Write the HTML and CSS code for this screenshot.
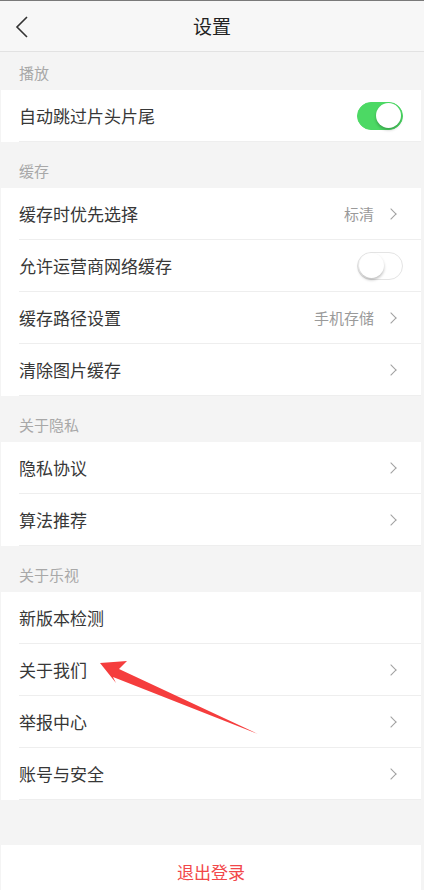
FILE: index.html
```html
<!DOCTYPE html>
<html lang="zh-CN">
<head>
    <meta charset="UTF-8">
    <meta name="viewport" content="width=device-width, initial-scale=1.0">
    <title>设置</title>
    <link rel="stylesheet" href="styles.css">
</head>
<body>
    <div class="page">
        <header class="nav">
            <span class="nav-back">
                <svg width="14" height="22" viewBox="0 0 14 22"><polyline points="12,1 2,11 12,21" fill="none" stroke="#333" stroke-width="1.6"/></svg>
            </span>
            <h1>设置</h1>
            <span></span>
        </header>

        <div class="section-title first">播放</div>
        <div class="group">
            <div class="row">
                <div class="row-body">
                    <span class="label">自动跳过片头片尾</span>
                    <span class="switch on"><i></i></span>
                </div>
            </div>
        </div>

        <div class="section-title">缓存</div>
        <div class="group">
            <div class="row">
                <div class="row-body">
                    <span class="label">缓存时优先选择</span>
                    <span class="value">标清</span>
                    <span class="chevron"></span>
                </div>
            </div>
            <div class="row">
                <div class="row-body">
                    <span class="label">允许运营商网络缓存</span>
                    <span class="switch"><i></i></span>
                </div>
            </div>
            <div class="row">
                <div class="row-body">
                    <span class="label">缓存路径设置</span>
                    <span class="value">手机存储</span>
                    <span class="chevron"></span>
                </div>
            </div>
            <div class="row">
                <div class="row-body">
                    <span class="label">清除图片缓存</span>
                    <span class="chevron"></span>
                </div>
            </div>
        </div>

        <div class="section-title">关于隐私</div>
        <div class="group">
            <div class="row">
                <div class="row-body">
                    <span class="label">隐私协议</span>
                    <span class="chevron"></span>
                </div>
            </div>
            <div class="row">
                <div class="row-body">
                    <span class="label">算法推荐</span>
                    <span class="chevron"></span>
                </div>
            </div>
        </div>

        <div class="section-title">关于乐视</div>
        <div class="group">
            <div class="row">
                <div class="row-body">
                    <span class="label">新版本检测</span>
                </div>
            </div>
            <div class="row">
                <div class="row-body">
                    <span class="label">关于我们</span>
                    <span class="chevron"></span>
                </div>
            </div>
            <div class="row">
                <div class="row-body">
                    <span class="label">举报中心</span>
                    <span class="chevron"></span>
                </div>
            </div>
            <div class="row">
                <div class="row-body">
                    <span class="label">账号与安全</span>
                    <span class="chevron"></span>
                </div>
            </div>
        </div>

        <div class="logout">退出登录</div>

        <!-- annotation arrow drawn over the list -->
        <svg class="arrow" width="424" height="890" viewBox="0 0 424 890">
            <polygon points="100,663 127,661 119,669 258,734 113,677 116,683" fill="#f53d3d"/>
        </svg>
    </div>
</body>
</html>
```

FILE: styles.css
```css
* {
    margin: 0;
    padding: 0;
    box-sizing: border-box;
}

body {
    font-family: "Noto Sans CJK SC", "Noto Sans", sans-serif;
    background-color: #f4f4f4;
    color: #333;
}

.page {
    position: relative;
    width: 424px;
    height: 890px;
    overflow: hidden;
}

.nav {
    height: 52px;
    display: grid;
    grid-template-columns: 48px 1fr 48px;
    align-items: center;
    background-color: #f7f7f7;
    border-top: 1px solid #7a7a7a;
    border-bottom: 1px solid #e2e2e2;
}

.nav-back {
    display: flex;
    padding-left: 15px;
    padding-top: 1px;
}

.nav h1 {
    text-align: center;
    font-size: 19px;
    font-weight: normal;
    color: #222;
    line-height: 24px;
}

.section-title {
    padding: 21px 19px 9px;
    font-size: 15px;
    line-height: 16px;
    color: #a8a8a8;
}

.section-title.first {
    padding-top: 13px;
}

.group {
    background-color: #fff;
    margin: 0 3px 0 1px;
}

.row {
    padding-left: 18px;
}

.row-body {
    height: 52px;
    display: flex;
    align-items: center;
    padding-right: 18px;
    border-bottom: 1px solid #eeeeee;
}

.label {
    flex: 1;
    font-size: 17px;
    color: #373737;
}

.value {
    font-size: 15px;
    color: #9a9a9a;
    margin-right: 13px;
}

.chevron {
    width: 8px;
    height: 8px;
    border-top: 1.5px solid #a0a0a0;
    border-right: 1.5px solid #a0a0a0;
    transform: rotate(45deg);
    margin-right: 8px;
}

.switch {
    width: 46px;
    height: 28px;
    border-radius: 14px;
    background-color: #fff;
    border: 1.5px solid #e4e4e4;
    display: flex;
    align-items: center;
    padding: 0 1px;
}

.switch i {
    width: 25px;
    height: 25px;
    border-radius: 50%;
    background-color: #fff;
    box-shadow: 0 2px 3px rgba(0, 0, 0, 0.25);
}

.switch.on {
    background-color: #4cd964;
    border-color: #4cd964;
    justify-content: flex-end;
}

.logout {
    margin: 45px 3px 0 1px;
    height: 56px;
    background-color: #fff;
    text-align: center;
    padding-top: 15px;
    font-size: 17px;
    line-height: 24px;
    color: #f2474a;
}

.arrow {
    position: absolute;
    left: 0;
    top: 0;
    pointer-events: none;
}
```
